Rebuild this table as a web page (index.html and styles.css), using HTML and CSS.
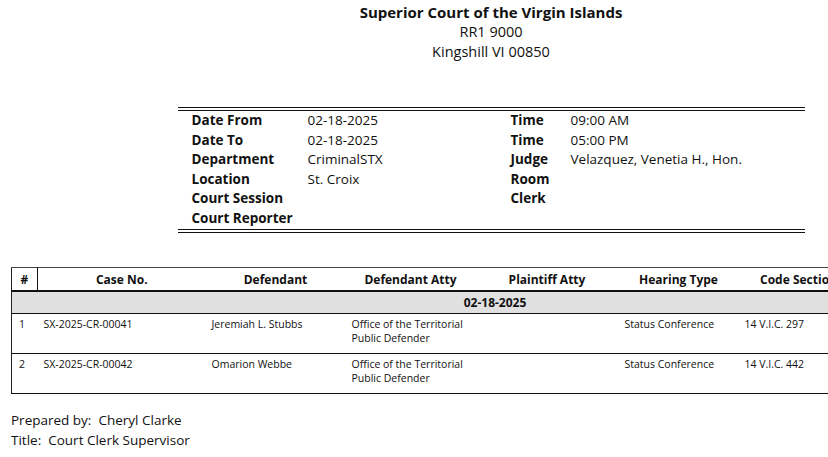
FILE: index.html
```html
<!DOCTYPE html>
<html>
<head>
<meta charset="utf-8">
<link rel="stylesheet" href="styles.css">
</head>
<body>
<div class="page">
  <header class="court">
    <div class="court-name">Superior Court of the Virgin Islands</div>
    <div>RR1 9000</div>
    <div>Kingshill VI 00850</div>
  </header>

  <section class="info">
    <div class="info-col left">
      <div class="lbl">Date From</div><div>02-18-2025</div>
      <div class="lbl">Date To</div><div>02-18-2025</div>
      <div class="lbl">Department</div><div>CriminalSTX</div>
      <div class="lbl">Location</div><div>St. Croix</div>
      <div class="lbl">Court Session</div><div></div>
      <div class="lbl">Court Reporter</div><div></div>
    </div>
    <div class="info-col right">
      <div class="lbl">Time</div><div>09:00 AM</div>
      <div class="lbl">Time</div><div>05:00 PM</div>
      <div class="lbl">Judge</div><div>Velazquez, Venetia H., Hon.</div>
      <div class="lbl">Room</div><div></div>
      <div class="lbl">Clerk</div><div></div>
    </div>
  </section>

  <table class="cases">
    <colgroup>
      <col class="c-num"><col class="c-case"><col class="c-def"><col class="c-datty">
      <col class="c-patty"><col class="c-type"><col class="c-code"><col class="c-rest">
    </colgroup>
    <thead>
      <tr>
        <th class="num">#</th>
        <th>Case No.</th>
        <th>Defendant</th>
        <th>Defendant Atty</th>
        <th>Plaintiff Atty</th>
        <th>Hearing Type</th>
        <th>Code Section</th>
        <th>Charge</th>
      </tr>
    </thead>
    <tbody>
      <tr class="group"><td colspan="8">02-18-2025</td></tr>
      <tr>
        <td>1</td>
        <td>SX-2025-CR-00041</td>
        <td>Jeremiah L. Stubbs</td>
        <td>Office of the Territorial Public Defender</td>
        <td></td>
        <td>Status Conference</td>
        <td>14 V.I.C. 297</td>
        <td></td>
      </tr>
      <tr>
        <td>2</td>
        <td>SX-2025-CR-00042</td>
        <td>Omarion Webbe</td>
        <td>Office of the Territorial Public Defender</td>
        <td></td>
        <td>Status Conference</td>
        <td>14 V.I.C. 442</td>
        <td></td>
      </tr>
    </tbody>
  </table>

  <footer class="prepared">
    <div>Prepared by:&nbsp; Cheryl Clarke</div>
    <div>Title:&nbsp; Court Clerk Supervisor</div>
  </footer>
</div>
</body>
</html>
```

FILE: styles.css
```css
html, body {
  margin: 0;
  padding: 0;
  overflow: hidden;
  background: #fff;
}

body {
  font-family: "Open Sans", "Liberation Sans", sans-serif;
  color: #111;
}

.page {
  width: 960px;
  padding: 2px 0 0 11px;
}

.court {
  text-align: center;
  font-size: 14.5px;
  line-height: 20px;
}

.court-name {
  font-weight: 700;
  font-size: 15px;
}

.info {
  width: 627px;
  margin: 45px auto 0;
  border-top: 4px double #111;
  border-bottom: 4px double #111;
  display: grid;
  grid-template-columns: 319px 1fr;
  padding: 0;
  font-size: 13.5px;
  line-height: 19.6px;
}

.info-col {
  display: grid;
  align-content: start;
}

.info-col.left {
  grid-template-columns: 116px 1fr;
  padding-left: 14px;
}

.info-col.right {
  grid-template-columns: 60px 1fr;
  padding-left: 14px;
}

.lbl {
  font-weight: 700;
}

.cases {
  margin-top: 34px;
  width: 960px;
  table-layout: fixed;
  border-collapse: collapse;
  border-left: 1px solid #222;
  border-top: 1px solid #444;
  font-size: 10.5px;
}

.c-num { width: 26px; }
.c-case { width: 168px; }
.c-def { width: 140px; }
.c-datty { width: 130px; }
.c-patty { width: 143px; }
.c-type { width: 120px; }
.c-code { width: 120px; }

.cases th {
  font-weight: 700;
  font-size: 12px;
  line-height: 16px;
  padding: 4px 0 2px;
  text-align: center;
  border-bottom: 2px solid #111;
}

.cases th.num {
  border-right: 1px solid #111;
}

.cases .group td {
  background: #e0e0e0;
  font-weight: 700;
  font-size: 12px;
  line-height: 16px;
  text-align: center;
  padding: 3px 0 2px;
  border-bottom: 1px solid #111;
}

.cases td {
  vertical-align: top;
  line-height: 14px;
  padding: 3px 6px 8px;
  border-bottom: 1px solid #111;
}

.cases td:first-child {
  padding-left: 7px;
}

.prepared {
  margin-top: 16px;
  font-size: 13.5px;
  line-height: 20px;
}
```
